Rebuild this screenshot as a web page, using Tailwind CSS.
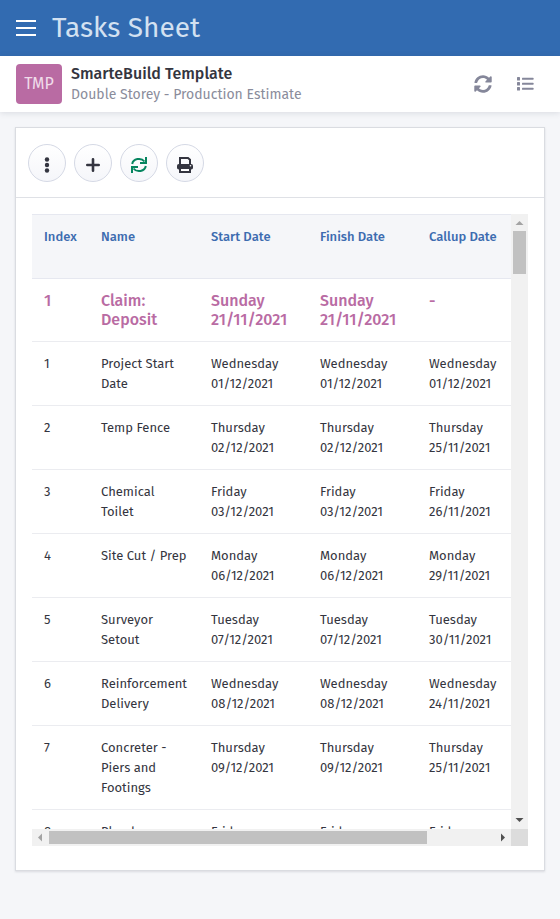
<!DOCTYPE html>
<html lang="en">
<head>
<meta charset="utf-8">
<meta name="viewport" content="width=device-width, initial-scale=1">
<title>Tasks Sheet</title>
<script src="https://cdn.jsdelivr.net/npm/@tailwindcss/browser@4"></script>
</head>
<body class="flex h-screen flex-col bg-[#f5f6f9] font-['Fira_Sans','Noto_Sans',sans-serif] text-[13px] leading-5 text-[#343540]">
<header class="flex h-14 shrink-0 items-center gap-4 bg-[#326bb1] px-4">
  <button type="button" aria-label="Menu" class="flex w-5 flex-col gap-[5px]">
    <span class="h-0.5 w-full bg-white"></span><span class="h-0.5 w-full bg-white"></span><span class="h-0.5 w-full bg-white"></span>
  </button>
  <h1 class="text-[28px] leading-8 text-[#d3e1f1]">Tasks Sheet</h1>
</header>
<section class="flex h-14 shrink-0 items-center bg-white pr-[26px] pl-4 shadow-[0_1px_6px_rgba(60,70,90,0.15)]">
  <div class="flex h-10 w-[46px] items-center justify-center rounded bg-[#b96ba3] text-[16px] text-[#f0dcea]">TMP</div>
  <div class="ml-[9px] flex-1 whitespace-nowrap">
    <h2 class="text-[16px] leading-[21px] font-medium text-[#343540]">SmarteBuild Template</h2>
    <p class="text-[14px] leading-[21px] text-[#8a8c9b]">Double Storey - Production Estimate</p>
  </div>
  <button type="button" aria-label="Refresh" class="mr-6 text-[#85879a]">
    <svg class="h-[18px] w-[18px]" viewBox="0 0 512 512" fill="currentColor"><path d="M370.7 133.3C339.5 104 298.9 88 255.8 88c-77.5.1-144.3 53.2-162.8 126.9-1.3 5.4-6.1 9.1-11.7 9.1H24.1c-7.5 0-13.2-6.8-11.8-14.2C33.9 94.9 134.8 8 256 8c66.4 0 126.8 26.1 171.3 68.7L463 41c15.1-15.1 41-4.4 41 17v134c0 13.3-10.7 24-24 24H346c-21.4 0-32.1-25.9-17-41l41.7-41.7zM32 296h134c21.4 0 32.1 25.900 17 41l-41.8 41.8c31.300 29.300 71.800 45.300 114.900 45.300 77.400-.1 144.300-53.100 162.800-126.800 1.300-5.400 6.100-9.100 11.700-9.100h57.300c7.500 0 13.200 6.800 11.800 14.200C478.100 417.100 377.200 504 256 504c-66.400 0-126.800-26.100-171.300-68.700L49 471c-15.100 15.100-41 4.400-41-17V320c0-13.300 10.700-24 24-24z"/></svg>
  </button>
  <button type="button" aria-label="List" class="text-[#85879a]">
    <svg class="h-4 w-[18px]" viewBox="0 0 18 16" fill="currentColor"><rect x="1" y="1" width="3" height="3.500" rx=".6"/><rect x="1" y="6" width="3" height="3.500" rx=".6"/><rect x="1" y="11" width="3" height="3.500" rx=".6"/><rect x="6" y="1.800" width="11.500" height="2" rx=".5"/><rect x="6" y="6.800" width="11.500" height="2" rx=".5"/><rect x="6" y="11.800" width="11.500" height="2" rx=".5"/></svg>
  </button>
</section>
<main class="mx-[15px] mt-[15px] mb-12 flex min-h-0 flex-1 flex-col border border-[#dadce1] bg-white shadow-[0_1px_2px_rgba(60,70,90,0.15)]">
  <div class="flex h-[70px] shrink-0 items-center gap-2 border-b border-[#dfe1e6] px-3">
    <button type="button" aria-label="More" class="flex h-[38px] w-[38px] items-center justify-center rounded-full border border-[#d5d9e5] bg-linear-to-b from-white to-[#f5f6fa]">
      <svg class="mt-1 h-4 w-4" viewBox="0 0 16 16" fill="currentColor"><circle cx="8" cy="2.500" r="2.200"/><circle cx="8" cy="8" r="2.200"/><circle cx="8" cy="13.500" r="2.200"/></svg>
    </button>
    <button type="button" aria-label="Add" class="flex h-[38px] w-[38px] items-center justify-center rounded-full border border-[#d5d9e5] bg-linear-to-b from-white to-[#f5f6fa]">
      <svg class="mt-1 h-4 w-4" viewBox="0 0 16 16" fill="none" stroke="currentColor" stroke-width="2.600" stroke-linecap="round"><path d="M8 2.300v11.400M2.300 8h11.400"/></svg>
    </button>
    <button type="button" aria-label="Reload" class="flex h-[38px] w-[38px] items-center justify-center rounded-full border border-[#d5d9e5] bg-linear-to-b from-white to-[#f5f6fa] text-[#06855f]">
      <svg class="mt-1 h-4 w-4" viewBox="0 0 16 16" fill="none" stroke="currentColor" stroke-width="2"><path d="M1.200 7A6.800 6 0 0 1 13.500 4.500M15 0v6H9M14.800 9A6.800 6 0 0 1 2.500 11.500M1 16v-6h6"/></svg>
    </button>
    <button type="button" aria-label="Print" class="flex h-[38px] w-[38px] items-center justify-center rounded-full border border-[#d5d9e5] bg-linear-to-b from-white to-[#f5f6fa]">
      <svg class="mt-1 h-4 w-4" viewBox="0 0 16 16"><path d="M3 7V1H11l2 1.800V7" fill="none" stroke="currentColor" stroke-width="2"/><rect y="7" width="16" height="5.500" rx="1.800" fill="currentColor"/><rect x="3" y="11" width="10" height="4" fill="#fff" stroke="currentColor" stroke-width="2"/><circle cx="13.500" cy="8.800" r=".8" fill="#fff"/></svg>
    </button>
  </div>
  <div class="mx-4 mt-4 mb-6 grid min-h-0 flex-1 grid-cols-[minmax(0,1fr)_17px] grid-rows-[minmax(0,1fr)_17px]">
    <div class="overflow-hidden">
      <table class="w-[563px] table-fixed border-separate border-spacing-0 text-left [&_td]:border-b [&_td]:border-[#ebecf0] [&_td]:px-3 [&_td]:pt-3 [&_td]:pb-[11px] [&_td]:align-top [&_th]:h-[65px] [&_th]:border-y [&_th]:border-[#e6e8f0] [&_th]:px-3 [&_th]:pt-3 [&_th]:align-top [&_th]:font-medium">
        <colgroup><col class="w-[57px]"><col class="w-[110px]"><col class="w-[109px]"><col class="w-[109px]"><col></colgroup>
        <thead class="bg-[#f5f6f9] text-[#3d6cb0]"><tr><th>Index</th><th>Name</th><th>Start Date</th><th>Finish Date</th><th>Callup Date</th></tr></thead>
        <tbody>
          <tr class="h-[63px] text-[16px] leading-[19px] font-medium text-[#b96ba3]"><td>1</td><td>Claim:<br>Deposit</td><td>Sunday<br>21/11/2021</td><td>Sunday<br>21/11/2021</td><td>-</td></tr>
          <tr><td>1</td><td>Project Start<br>Date</td><td>Wednesday<br>01/12/2021</td><td>Wednesday<br>01/12/2021</td><td>Wednesday<br>01/12/2021</td></tr>
          <tr><td>2</td><td>Temp Fence</td><td>Thursday<br>02/12/2021</td><td>Thursday<br>02/12/2021</td><td>Thursday<br>25/11/2021</td></tr>
          <tr><td>3</td><td>Chemical<br>Toilet</td><td>Friday<br>03/12/2021</td><td>Friday<br>03/12/2021</td><td>Friday<br>26/11/2021</td></tr>
          <tr><td>4</td><td>Site Cut / Prep</td><td>Monday<br>06/12/2021</td><td>Monday<br>06/12/2021</td><td>Monday<br>29/11/2021</td></tr>
          <tr><td>5</td><td>Surveyor<br>Setout</td><td>Tuesday<br>07/12/2021</td><td>Tuesday<br>07/12/2021</td><td>Tuesday<br>30/11/2021</td></tr>
          <tr><td>6</td><td>Reinforcement<br>Delivery</td><td>Wednesday<br>08/12/2021</td><td>Wednesday<br>08/12/2021</td><td>Wednesday<br>24/11/2021</td></tr>
          <tr><td>7</td><td>Concreter -<br>Piers and<br>Footings</td><td>Thursday<br>09/12/2021</td><td>Thursday<br>09/12/2021</td><td>Thursday<br>25/11/2021</td></tr>
          <tr><td>8</td><td>Plumber</td><td>Friday<br>10/12/2021</td><td>Friday<br>10/12/2021</td><td>Friday<br>26/11/2021</td></tr>
        </tbody>
      </table>
    </div>
    <div class="flex flex-col items-center bg-[#f1f1f1]">
      <svg class="h-[17px] w-[17px] shrink-0" viewBox="0 0 17 17" fill="#a3a3a3"><path d="M4.500 11h8L8.500 7z"/></svg>
      <div class="h-[43px] w-[13px] bg-[#c1c1c1]"></div>
      <svg class="mt-auto h-[17px] w-[17px] shrink-0" viewBox="0 0 17 17" fill="#505050"><path d="M4.500 6h8L8.500 10z"/></svg>
    </div>
    <div class="flex items-center bg-[#f1f1f1]">
      <svg class="h-[17px] w-[17px] shrink-0" viewBox="0 0 17 17" fill="#a3a3a3"><path d="M10 4.500v8L6 8.500z"/></svg>
      <div class="flex flex-1"><div class="h-[13px] w-[85%] bg-[#c1c1c1]"></div></div>
      <svg class="h-[17px] w-[17px] shrink-0" viewBox="0 0 17 17" fill="#505050"><path d="M7 4.500v8l4-4z"/></svg>
    </div>
    <div class="bg-[#dcdcdc]"></div>
  </div>
</main>
</body>
</html>
